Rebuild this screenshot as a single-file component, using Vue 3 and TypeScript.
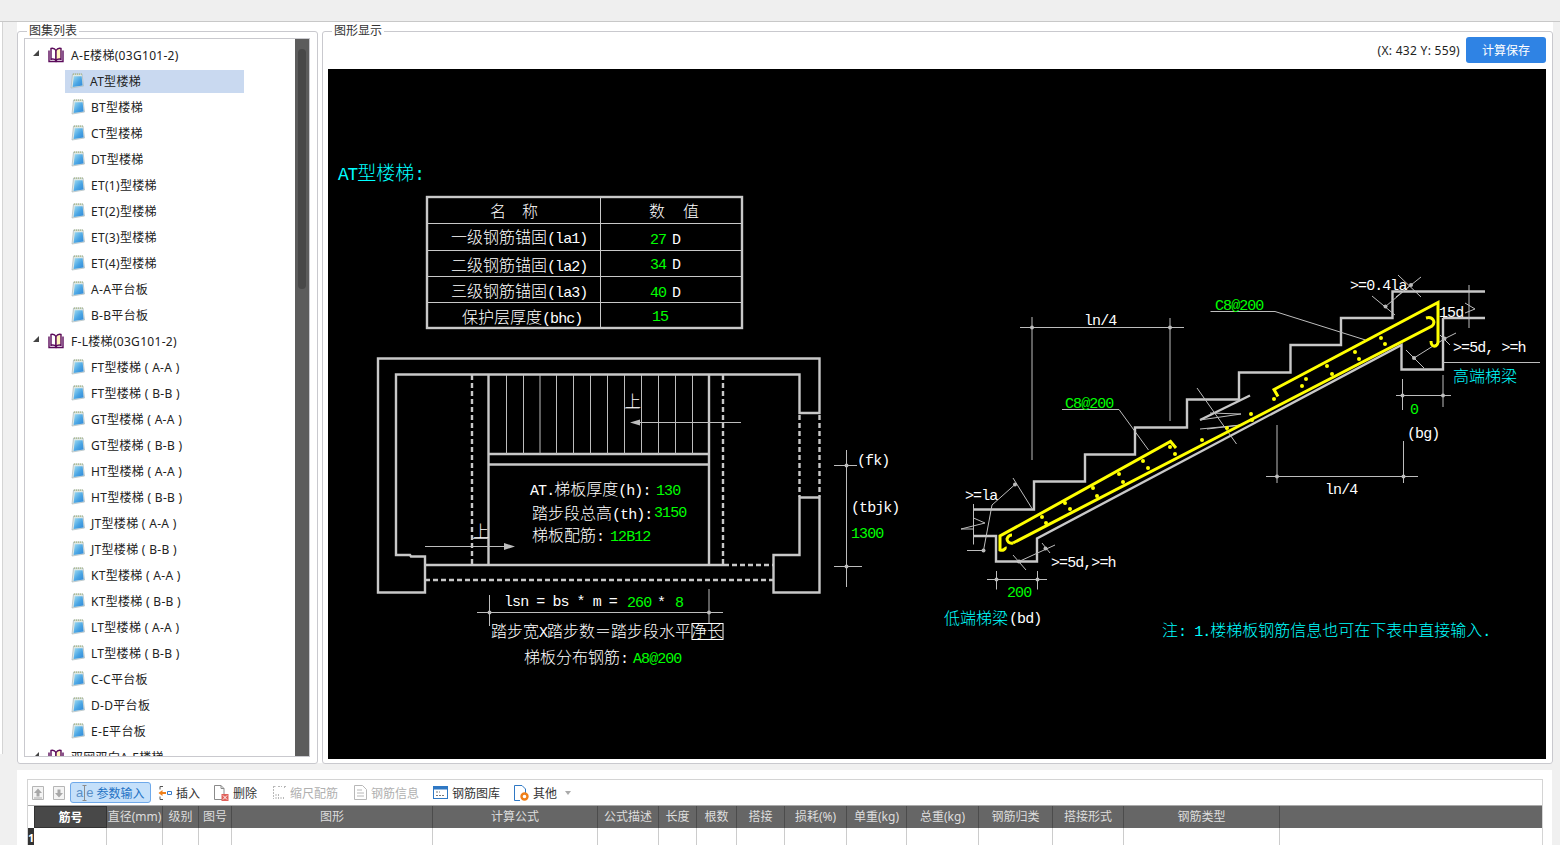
<template>
  <div class="page">
    <!-- 隐藏的图标定义 -->
    <svg width="0" height="0" class="defs">
      <defs>
        <linearGradient id="noteFill" x1="0" y1="0" x2="1" y2="1">
          <stop offset="0" stop-color="#9fdcf2" />
          <stop offset="0.55" stop-color="#4aa5e4" />
          <stop offset="1" stop-color="#2f86d6" />
        </linearGradient>
      </defs>
    </svg>

    <div class="topbar"></div>

    <div class="main">
      <div class="side-stub"></div>

      <section class="group list-group">
        <span class="group-title">图集列表</span>
        <div class="tree-box">
          <div class="tree">
            <template v-for="g in groups" :key="g.name">
              <div class="tree-row root">
                <span class="caret"></span>
                <svg class="book" width="16" height="16" viewBox="0 0 16 16">
                  <path d="M3 1.5C5 1 7 1.8 8 3.5V13.5C7 12.2 5 11.8 3 12.3Z" fill="#fff" stroke="#5a0a5a" stroke-width="1.4" />
                  <path d="M8 3.5C9 1.8 11 1 13 1.5V12.3C11 11.8 9 12.2 8 13.5Z" fill="#fff3bc" stroke="#5a0a5a" stroke-width="1.4" />
                  <path d="M1 3.5V14.5H15V3.5" fill="none" stroke="#5a0a5a" stroke-width="1.4" />
                </svg>
                <span>{{ g.name }}</span>
              </div>
              <div
                v-for="item in g.items"
                :key="g.name + item"
                class="tree-row leaf"
                :class="{ active: item === 'AT型楼梯' }"
              >
                <svg class="note" width="14" height="16" viewBox="0 0 14 16">
                  <path d="M2.5 1H12L13.5 13L1 15Z" fill="#dfe8e4" stroke="#a9b8bd" stroke-width="0.7" />
                  <path d="M3.8 3.2H11.6L12.6 12.4L2.6 14Z" fill="url(#noteFill)" />
                  <path d="M3 1.2H11.8" stroke="#a7b67e" stroke-width="1.2" stroke-dasharray="1 1" />
                </svg>
                <span>{{ item }}</span>
              </div>
            </template>
          </div>
          <div class="scrollbar"><div class="thumb"></div></div>
        </div>
      </section>

      <section class="group view-group">
        <span class="group-title">图形显示</span>
        <div class="view-head">
          <span class="coords">(X: 432 Y: 559)</span>
          <button class="save-btn">计算保存</button>
        </div>
        <svg class="cad" viewBox="328 69 1218 690" width="1218" height="690">
          <!-- 参数表 -->
          <rect class="wall" x="427" y="197" width="315" height="131" />
          <path class="mid" d="M427 223.5H742M427 250.5H742M427 276.5H742M427 302.5H742M600.5 197V328" />

          <!-- 平面图 -->
          <path class="wall" d="M378 358.5H819.5V413H799.5V374.5H396V555H410L411 556.5H425V592.5H378Z" />
          <path class="wall" d="M819.5 592.5V497.5H799.5V555H773.5V592.5Z" />
          <path class="dash" d="M799.5 415V497M819.5 415V497M472 375V565M723 375V565M724 565H773M425 580H773" />
          <path class="wall" d="M425 565H724M488.5 375V565M709 375V565M489 454H709M489 464.5H709" />
          <path class="thin" :d="treadPath" />
          <path class="thin" d="M741 422.5H640M425 546.5H505M624.5 408H639.5M472.5 538.5H488.5" />
          <path class="fill" d="M630 422.5L640 419.5V425.5Z M515 546.5L504 543V550Z" />
          <path class="thin" d="M846.5 450V587M834 465.5H857M834 566.5H862M477 612.5H723M489.5 595V626M709 589V623" />
          <circle v-for="d in dimDots" :key="d[0] + '-' + d[1]" :cx="d[0]" :cy="d[1]" r="2" fill="#bbb" />
          <rect x="692" y="623.5" width="31" height="16" fill="none" stroke="#fff" />

          <!-- 剖面图 -->
          <path class="wall" d="M973 509.5H1034V481.5H1085V454.5H1135V427.5H1187V399.5H1239V372.5H1290.5V345H1341V318H1392.5V291.5H1485M1443 318H1485M1443 318V369.5H1401.5V345L1037 538.5V561.5H996V536H973" />
          <path class="wall" d="M1250 395.5L1200 420" />
          <path class="thin" d="M973.5 504V544.5M973.5 518L985 523L961 529H973.5" />
          <path class="thin" d="M1200 420L1241 414L1210 413M1200 429L1241 425L1207 429" />
          <path class="thin" d="M1197 388L1236.5 444M1032 317V460M1170 318V421M1020 327.5H1184M1266 476.5H1418M1277 425V483M1403.5 441V483" />
          <path class="thin" d="M1210.5 311.5H1275L1365.5 340M1062 409.5H1119L1148.5 450" />
          <path class="thin" d="M1385.5 306.5L1411 285M1372 296L1395 315M1398 275L1421 297M1421 277L1396 297" />
          <path class="thin" d="M1469 285V328M1465 303L1475 309L1465 313M1443 362.5H1540" />
          <path class="thin" d="M1414 358L1445 338.5L1456 333M1406 350L1424 368M1440 335L1450 345" />
          <path class="thin" d="M1396 395.5H1451M1402.5 379V410M1443 375V407" />
          <path class="thin" d="M983.5 550.5H967M983.5 550.5L992 505L1015 484.5M1013 478L1032 508.5" />
          <path class="thin" d="M1019 561.5L1055 545M1042 543L1050 553M1013 555L1026 570" />
          <path class="thin" d="M987 579.5H1047M996.5 571V589.5M1037.5 571V589.5" />

          <g class="rebar">
            <path d="M1278 396.5L1274 389.5L1438 302.5V341C1438 348 1431 348 1431 341" />
            <path d="M1013 543L1432 326C1436 322 1433 316 1426 318" />
            <path d="M1176 448L1170.5 441.5L1000 536V550C1003 551 1006 549 1005 547" />
            <path d="M1013 543C1009 544 1007 541 1007 539C1008 536 1010 535 1012 535" />
          </g>
          <circle v-for="d in rebarDots" :key="d[0] + '_' + d[1]" :cx="d[0]" :cy="d[1]" r="2" fill="#ff0" />

          <!-- 文字 -->
          <text
            v-for="l in labels"
            :key="l.s + l.x + l.y"
            :x="l.x"
            :y="l.y"
            class="t"
            :class="[l.c, l.size]"
          ><tspan v-for="(r, i) in runs(l.s)" :key="i" :class="{ n: r.latin }">{{ r.text }}</tspan></text>
        </svg>
      </section>
    </div>

    <div class="bottom">
      <div class="bottom-box">
        <div class="toolbar">
          <span class="arrow-btn">
            <svg width="12" height="14" viewBox="0 0 12 14"><path d="M0.5 0.5H11.5V13.5H0.5Z" fill="#f4f4f4" stroke="#b5b5b5" /><path d="M6 2.5L10 7H7.5V10.5H4.5V7H2Z" fill="#a8a8a8" /><path d="M2 12H10" stroke="#a8a8a8" /></svg>
          </span>
          <span class="arrow-btn second">
            <svg width="12" height="14" viewBox="0 0 12 14"><path d="M0.5 0.5H11.5V13.5H0.5Z" fill="#f4f4f4" stroke="#b5b5b5" /><path d="M6 11.5L10 7H7.5V3.5H4.5V7H2Z" fill="#a8a8a8" /></svg>
          </span>
          <button class="tool param">
            <span class="ab">a</span>
            <svg class="cursor" width="5" height="16" viewBox="0 0 5 16"><path d="M0.5 0.5H4.5M2.5 0.5V15.5M0.5 15.5H4.5" fill="none" stroke="#8c8c8c" /></svg>
            <span class="ab">e</span>
            <span class="param-text">参数输入</span>
          </button>
          <span class="tool insert">
            <svg width="14" height="16" viewBox="0 0 14 16">
              <path d="M2 4.5V1.5H5M2 11.5V14.5H5" fill="none" stroke="#555" />
              <path d="M0.5 8L4.5 5V7H8V9H4.5V11Z" fill="#f0801a" />
              <path d="M9.5 6.5H13.5V9.5H9.5Z" fill="#fff" stroke="#3a7cc9" />
            </svg>
            插入
          </span>
          <span class="tool del">
            <svg width="16" height="17" viewBox="0 0 16 17">
              <path d="M1.5 1.5H8L11 4.5V15.5H1.5Z" fill="#fff" stroke="#8a8a8a" />
              <path d="M8 1.5V4.5H11" fill="none" stroke="#8a8a8a" />
              <rect x="8.5" y="10" width="7" height="7" fill="#e0605a" />
              <path d="M10 11.5L14 15.5M14 11.5L10 15.5" stroke="#fff" />
            </svg>
            删除
          </span>
          <span class="tool muted scale">
            <svg width="14" height="15" viewBox="0 0 14 15">
              <path d="M1.5 1V14M1.5 1.5H4M6 1.5H10M12 1.5H14M12.5 1V3M4 14V9M6.5 14V8M9 14V11M11.5 14V12" fill="none" stroke="#b8b8b8" stroke-dasharray="2 1" />
            </svg>
            缩尺配筋
          </span>
          <span class="tool muted info">
            <svg width="13" height="15" viewBox="0 0 13 15">
              <path d="M0.5 0.5H8.5L12.5 4.5V14.5H0.5Z" fill="#fff" stroke="#b8b8b8" />
              <path d="M3 5H8M3 8H10M3 11H10" stroke="#b8b8b8" />
            </svg>
            钢筋信息
          </span>
          <span class="tool lib">
            <svg width="15" height="13" viewBox="0 0 15 13">
              <rect x="0.5" y="0.5" width="14" height="12" fill="#fff" stroke="#2f78c4" />
              <rect x="0.5" y="0.5" width="14" height="3" fill="#2f78c4" />
              <path d="M3 6H7M3 9.5H12" stroke="#7a7a7a" stroke-dasharray="2 1" />
            </svg>
            钢筋图库
          </span>
          <span class="tool other">
            <svg width="15" height="16" viewBox="0 0 15 16">
              <path d="M6 15.5H0.5V0.5H8L11.5 4V8" fill="#fff" stroke="#2f78c4" />
              <circle cx="10.5" cy="11.5" r="3" fill="none" stroke="#f0801a" stroke-width="2.4" />
            </svg>
            其他
            <span class="drop"></span>
          </span>
        </div>
        <div class="table-head">
          <div class="row-corner"></div>
          <div
            v-for="c in columns"
            :key="c.name"
            class="th"
            :class="{ current: c.name === '筋号' }"
            :style="{ width: c.width + 'px' }"
          >{{ c.name }}</div>
          <div class="th rest"></div>
        </div>
        <div class="table-row">
          <div class="row-no">1</div>
          <div v-for="c in columns" :key="c.name" class="td" :style="{ width: c.width + 'px' }"></div>
          <div class="td rest"></div>
        </div>
      </div>
    </div>
  </div>
</template>

<script setup lang="ts">
const suffix = ['( A-A )', '( B-B )']

const groups = [
  {
    name: 'A-E楼梯(03G101-2)',
    items: ['AT型楼梯', 'BT型楼梯', 'CT型楼梯', 'DT型楼梯', 'ET(1)型楼梯', 'ET(2)型楼梯', 'ET(3)型楼梯', 'ET(4)型楼梯', 'A-A平台板', 'B-B平台板']
  },
  {
    name: 'F-L楼梯(03G101-2)',
    items: [
      ...['FT', 'GT', 'HT', 'JT', 'KT', 'LT'].flatMap((n) => suffix.map((s) => `${n}型楼梯 ${s}`)),
      'C-C平台板',
      'D-D平台板',
      'E-E平台板'
    ]
  },
  { name: '双网双向A-E楼梯', items: [] as string[] }
]

interface Label {
  x: number
  y: number
  s: string
  c: 'w' | 'g' | 'cy'
  size?: string
}

const labels: Label[] = [
  { x: 338, y: 180, s: 'AT型楼梯:', c: 'cy', size: 'big' },
  { x: 490, y: 217, s: '名', c: 'w' },
  { x: 522, y: 217, s: '称', c: 'w' },
  { x: 649, y: 217, s: '数', c: 'w' },
  { x: 683, y: 217, s: '值', c: 'w' },
  { x: 451, y: 243, s: '一级钢筋锚固(la1)', c: 'w' },
  { x: 451, y: 271, s: '二级钢筋锚固(la2)', c: 'w' },
  { x: 451, y: 297, s: '三级钢筋锚固(la3)', c: 'w' },
  { x: 462, y: 323, s: '保护层厚度(bhc)', c: 'w' },
  { x: 650, y: 244, s: '27', c: 'g' },
  { x: 672, y: 244, s: 'D', c: 'w' },
  { x: 650, y: 269, s: '34', c: 'g' },
  { x: 672, y: 269, s: 'D', c: 'w' },
  { x: 650, y: 297, s: '40', c: 'g' },
  { x: 672, y: 297, s: 'D', c: 'w' },
  { x: 652, y: 321, s: '15', c: 'g' },
  { x: 625, y: 407, s: '上', c: 'w' },
  { x: 473, y: 537, s: '上', c: 'w' },
  { x: 530, y: 495, s: 'AT.梯板厚度(h):', c: 'w' },
  { x: 656, y: 495, s: '130', c: 'g' },
  { x: 532, y: 519, s: '踏步段总高(th):', c: 'w' },
  { x: 654, y: 517, s: '3150', c: 'g' },
  { x: 532, y: 541, s: '梯板配筋:', c: 'w' },
  { x: 610, y: 541, s: '12B12', c: 'g' },
  { x: 857, y: 465, s: '(fk)', c: 'w' },
  { x: 851, y: 512, s: '(tbjk)', c: 'w' },
  { x: 851, y: 538, s: '1300', c: 'g' },
  { x: 504, y: 606, s: 'lsn = bs * m =', c: 'w' },
  { x: 627, y: 607, s: '260', c: 'g' },
  { x: 657, y: 607, s: '*', c: 'w' },
  { x: 675, y: 607, s: '8', c: 'g' },
  { x: 491, y: 637, s: '踏步宽X踏步数＝踏步段水平净长', c: 'w' },
  { x: 524, y: 663, s: '梯板分布钢筋:', c: 'w' },
  { x: 633, y: 663, s: 'A8@200', c: 'g' },
  { x: 1084, y: 325, s: 'ln/4', c: 'w' },
  { x: 1325, y: 494, s: 'ln/4', c: 'w' },
  { x: 1215, y: 310, s: 'C8@200', c: 'g' },
  { x: 1065, y: 408, s: 'C8@200', c: 'g' },
  { x: 1350, y: 290, s: '>=0.4la', c: 'w' },
  { x: 1439, y: 317, s: '15d', c: 'w' },
  { x: 1453, y: 352, s: '>=5d, >=h', c: 'w' },
  { x: 1453, y: 382, s: '高端梯梁', c: 'cy' },
  { x: 1410, y: 414, s: '0', c: 'g' },
  { x: 1407, y: 438, s: '(bg)', c: 'w' },
  { x: 965, y: 500, s: '>=la', c: 'w' },
  { x: 1051, y: 567, s: '>=5d,>=h', c: 'w' },
  { x: 1007, y: 597, s: '200', c: 'g' },
  { x: 944, y: 624, s: '低端梯梁', c: 'cy' },
  { x: 1009, y: 623, s: '(bd)', c: 'w' },
  { x: 1162, y: 636, s: '注: 1.楼梯板钢筋信息也可在下表中直接输入.', c: 'cy' }
]

// 拉丁字符和汉字分开，CAD 字体里西文是半角宽度
const runs = (s: string) =>
  (s.match(/[\x20-\x7e]+|[^\x20-\x7e]+/g) ?? []).map((text) => ({
    text,
    latin: /^[\x20-\x7e]/.test(text)
  }))

const treadX = [506.5, 523.5, 540, 556.5, 573.5, 590.5, 607.5, 624.5, 641.5, 658.5, 675.5, 692.5]
const treadPath = treadX.map((x) => `M${x} 375V454`).join('')

const dimDots = [
  [846.5, 465.5], [846.5, 566.5], [489.5, 612.5], [709, 612.5],
  [1032, 327.5], [1170, 327.5], [1277, 476.5], [1403.5, 476.5],
  [1402.5, 395.5], [1443, 395.5], [996.5, 579.5], [1037.5, 579.5],
  [1385.5, 306.5], [1411, 285], [1414, 358], [1444.5, 338.5],
  [983.5, 550.5], [1015, 484.5], [1019, 561.5], [1045.5, 548.5]
]

const rebarDots = [
  [1042, 517], [1046, 523], [1065, 503], [1070, 509], [1093, 488], [1097, 496],
  [1119, 474], [1123, 482], [1143, 461], [1148, 468], [1170, 447], [1175, 454],
  [1202, 440], [1227, 428], [1251, 414], [1252, 420], [1274, 399], [1302, 386],
  [1306, 379], [1327, 366], [1332, 374], [1355, 352], [1359, 359], [1381, 338], [1385, 344]
]

const columns = [
  { name: '筋号', width: 73 },
  { name: '直径(mm)', width: 56 },
  { name: '级别', width: 36 },
  { name: '图号', width: 33 },
  { name: '图形', width: 201 },
  { name: '计算公式', width: 165 },
  { name: '公式描述', width: 61 },
  { name: '长度', width: 38 },
  { name: '根数', width: 40 },
  { name: '搭接', width: 48 },
  { name: '损耗(%)', width: 62 },
  { name: '单重(kg)', width: 60 },
  { name: '总重(kg)', width: 72 },
  { name: '钢筋归类', width: 74 },
  { name: '搭接形式', width: 71 },
  { name: '钢筋类型', width: 156 }
]
</script>

<style>
html,
body {
  margin: 0;
  overflow: hidden;
}
</style>

<style scoped>
.page {
  width: 1560px;
  height: 845px;
  display: flex;
  flex-direction: column;
  overflow: hidden;
  background: #f0f0f0;
  font-family: "Noto Sans", "Noto Sans CJK SC", "Liberation Sans", sans-serif;
  font-size: 12px;
  color: #222;
}

.defs {
  position: absolute;
}

.topbar {
  height: 21px;
  flex: none;
  background: #efefef;
  border-bottom: 1px solid #c8c8c8;
}

.main {
  height: 741px;
  flex: none;
  display: flex;
  padding-top: 9px;
  box-sizing: border-box;
  padding-right: 8px;
  background: linear-gradient(#fff, #fff) 17px 0 / 1536px 100% no-repeat, #f0f0f0;
}

.side-stub {
  width: 2px;
  height: 100%;
  flex: none;
  margin-right: 14px;
  margin-top: -9px;
  background: #fff;
  border-right: 1px solid #d4d4d4;
}

.group {
  position: relative;
  box-sizing: border-box;
  height: 733px;
  background: #fff;
  border: 1px solid #c9c9ce;
  border-radius: 3px;
}

.group-title {
  position: absolute;
  top: -9px;
  left: 9px;
  padding: 0 2px;
  background: #fff;
  line-height: 16px;
  color: #333;
}

.list-group {
  width: 301px;
  flex: none;
  padding: 6px 7px 6px 6px;
}

.tree-box {
  position: relative;
  height: 719px;
  box-sizing: border-box;
  border: 1px solid #c9c9ce;
  overflow: hidden;
}

.tree {
  padding-top: 3px;
  letter-spacing: 0.3px;
}

.tree-row {
  height: 26px;
  display: flex;
  align-items: center;
  white-space: nowrap;
  color: #222;
}

.root {
  padding-left: 8px;
}

.caret {
  width: 0;
  height: 0;
  margin-right: 9px;
  margin-top: -5px;
  border-style: solid;
  border-width: 0 0 6px 6px;
  border-color: transparent transparent #444 transparent;
}

.book {
  margin-right: 7px;
}

.leaf {
  padding-left: 46px;
}

.note {
  margin-right: 6px;
}

.leaf.active {
  width: 179px;
  height: 23px;
  margin: 2px 0 1px 40px;
  padding: 0 0 1px 5px;
  box-sizing: border-box;
  background: #c9d9f0;
}

.scrollbar {
  position: absolute;
  top: 0;
  right: 0;
  bottom: 0;
  width: 14px;
  background: #5c5c5c;
}

.thumb {
  width: 8px;
  height: 240px;
  margin: 10px 0 0 3px;
  border-radius: 4px;
  background: #484848;
}

.view-group {
  width: 1231px;
  flex: none;
  margin-left: 4px;
  padding: 0 6px 0 5px;
}

.view-head {
  height: 37px;
  display: flex;
  justify-content: flex-end;
  align-items: center;
  gap: 6px;
}

.coords {
  letter-spacing: 0.3px;
}

.save-btn {
  width: 80px;
  height: 26px;
  margin-top: -1px;
  border: 0;
  border-radius: 3px;
  background: #2f83e4;
  color: #fff;
  font: inherit;
  font-size: 12px;
}

.cad {
  display: block;
  background: #000;
}

.t {
  font-family: "Noto Sans CJK SC", "Liberation Mono", monospace;
  font-size: 16px;
  font-weight: 300;
  white-space: pre;
}

.n {
  font-family: "Liberation Mono", monospace;
  font-size: 0.938em;
  letter-spacing: -0.0625em;
}

.w {
  fill: #fff;
}

.g {
  fill: #0f0;
}

.cy {
  fill: #0ff;
}

.big {
  font-size: 19px;
}

.wall {
  fill: none;
  stroke: #c8c8c8;
  stroke-width: 2.4;
}

.mid {
  fill: none;
  stroke: #c8c8c8;
  stroke-width: 1;
}

.dash {
  fill: none;
  stroke: #c8c8c8;
  stroke-width: 2.4;
  stroke-dasharray: 5 3;
}

.thin {
  fill: none;
  stroke: #bdbdbd;
  stroke-width: 1;
}

.fill {
  fill: #bdbdbd;
}

.rebar path {
  fill: none;
  stroke: #ff0;
  stroke-width: 3;
}

.bottom {
  flex: 1;
  margin: 7px 8px 0 17px;
  padding: 9px 9px 0 10px;
  background: #fff;
}

.bottom-box {
  box-sizing: border-box;
  border: 1px solid #d4d4d4;
  border-bottom: 0;
  height: 70px;
}

.toolbar {
  height: 25px;
  display: flex;
  align-items: center;
  white-space: nowrap;
  color: #333;
}

.arrow-btn {
  display: flex;
  margin-left: 4px;
}

.arrow-btn.second {
  margin-left: 9px;
}

.tool {
  display: flex;
  align-items: center;
  gap: 4px;
  font-size: 12px;
}

.param {
  width: 81px;
  height: 21px;
  margin-left: 5px;
  padding: 0 0 0 5px;
  gap: 0;
  box-sizing: border-box;
  border: 1px solid #6ea9ea;
  border-radius: 3px;
  background: #c5e0fa;
  color: #2372c4;
  font: inherit;
  font-size: 12px;
}

.ab {
  color: #5b8fc7;
  font-family: "Liberation Sans", sans-serif;
  font-size: 13px;
}

.cursor {
  margin: 0 -1px;
}

.param-text {
  margin-left: 3px;
}

.insert {
  margin-left: 7px;
}

.del {
  margin-left: 13px;
}

.scale {
  margin-left: 15px;
}

.info {
  margin-left: 16px;
}

.lib {
  margin-left: 14px;
}

.other {
  margin-left: 14px;
}

.muted {
  color: #b0b0b0;
}

.drop {
  width: 0;
  height: 0;
  margin-left: 4px;
  border-style: solid;
  border-width: 4px 3px 0;
  border-color: #aaa transparent transparent;
}

.table-head {
  display: flex;
  height: 22px;
  border-top: 1px solid #aaa;
}

.row-corner {
  width: 6px;
  flex: none;
  background: #fff;
}

.th {
  flex: none;
  box-sizing: border-box;
  text-align: center;
  line-height: 21px;
  background: #666;
  color: #ddd;
  border-right: 1px solid #4c4c4c;
  overflow: hidden;
  white-space: nowrap;
}

.th.current {
  background: #484848;
  color: #fff;
  font-weight: 700;
  border: 1px solid #333;
}

.rest {
  flex: 1;
  border-right: 0;
}

.table-row {
  display: flex;
  height: 18px;
}

.row-no {
  width: 6px;
  flex: none;
  background: #333;
  color: #fff;
  font-size: 11px;
  font-weight: 700;
  line-height: 20px;
  overflow: hidden;
}

.td {
  flex: none;
  box-sizing: border-box;
  background: #fff;
  border-right: 1px solid #ccc;
}

.td.rest {
  flex: 1;
  border-right: 0;
}
</style>
